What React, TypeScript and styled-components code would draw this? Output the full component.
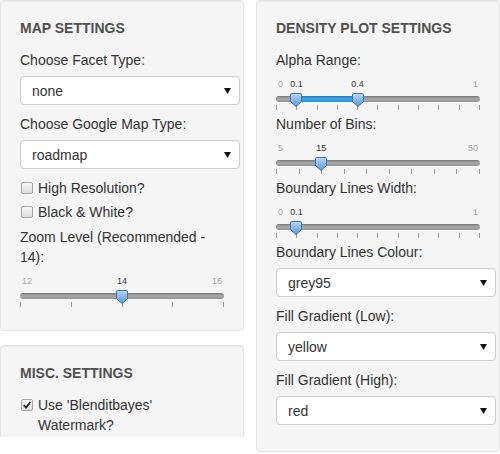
import React, { useId } from 'react';
import styled, { createGlobalStyle } from 'styled-components';

const Global = createGlobalStyle`
  html, body { margin: 0; padding: 0; background: #fff; }
  body {
    font-family: "Liberation Sans", Arial, Helvetica, sans-serif;
    font-size: 14px;
    line-height: 20px;
    color: #333;
  }
  * { box-sizing: border-box; }
`;

const Page = styled.div`
  display: grid;
  grid-template-columns: 244px 244px;
  column-gap: 12px;
  align-items: start;
  width: 500px;
  height: 454px;
  overflow: hidden;
`;

const Column = styled.div<{ $clip?: number }>`
  display: flex;
  flex-direction: column;
  gap: 14px;
  ${(p) => (p.$clip ? `height: ${p.$clip}px; overflow: hidden;` : '')}
`;

const Well = styled.div<{ $minHeight?: number }>`
  flex: none;
  background: #f5f5f5;
  border: 1px solid #e3e3e3;
  border-radius: 4px;
  box-shadow: inset 0 1px 1px rgba(0, 0, 0, 0.05);
  padding: 19px;
  ${(p) => (p.$minHeight ? `min-height: ${p.$minHeight}px;` : '')}
`;

const Heading = styled.h4`
  margin: 0 0 14px;
  font-size: 14px;
  line-height: 16px;
  font-weight: bold;
  color: #505050;
`;

const Label = styled.div`
  font-size: 14px;
  line-height: 20px;
  color: #333;
`;

const SelectGroup = styled.div`
  margin-bottom: 9px;
  &:last-child { margin-bottom: 7px; }
`;

const SelectBox = styled.div`
  margin-top: 6px;
  width: calc(100% + 16px);
  height: 29px;
  border: 1px solid #ccc;
  border-radius: 4px;
  background: #fff;
  display: flex;
  align-items: center;
  justify-content: space-between;
  padding: 0 8px 0 11px;
  color: #333;
  font-size: 14px;
`;

const Arrow = styled.svg`
  width: 7px;
  height: 6px;
  display: block;
`;

const CheckList = styled.div`
  display: flex;
  flex-direction: column;
  gap: 4px;
  margin-bottom: 5px;
`;

const CheckRow = styled.div`
  display: flex;
  align-items: flex-start;
  gap: 5px;
  line-height: 20px;
  color: #333;
`;

const Box = styled.span`
  flex: none;
  width: 12px;
  height: 12px;
  margin-top: 4px;
  margin-left: 1px;
  border: 1px solid #a6a6a6;
  border-radius: 2px;
  background: linear-gradient(#f6f6f6, #dedede);
  display: flex;
  align-items: center;
  justify-content: center;
`;

const SliderWrap = styled.div`
  height: 44px;
  padding-top: 8px;
`;

const LabelRow = styled.div`
  position: relative;
  height: 12px;
  font-size: 9px;
  line-height: 12px;
`;

const EdgeLabel = styled.span<{ $side: 'left' | 'right' }>`
  position: absolute;
  top: 0;
  ${(p) => p.$side}: 2px;
  color: #a8a8a8;
`;

const ValueLabel = styled.span`
  position: absolute;
  top: 0;
  transform: translateX(-50%);
  color: #333;
`;

const TrackArea = styled.div`
  position: relative;
  height: 6px;
  margin-top: 6px;
`;

const Track = styled.div`
  height: 6px;
  border-radius: 3px;
  background: linear-gradient(#787878, #a8a8a8 45%, #969696);
`;

const Bar = styled.div`
  position: absolute;
  top: 0;
  height: 6px;
  background: linear-gradient(#1c78bd, #3fa6e8 45%, #2a90d8);
`;

const Handle = styled.svg`
  position: absolute;
  top: -3px;
  width: 12px;
  height: 14px;
  margin-left: -6px;
  overflow: visible;
`;

const Ticks = styled.div`
  display: flex;
  justify-content: space-between;
  height: 5px;
  margin-top: 3px;
`;

const Tick = styled.span`
  width: 1px;
  height: 5px;
  background: #9a9a9a;
`;

function HandleIcon({ p }: { p: number }) {
  const id = useId().replace(/:/g, '');
  return (
    <Handle viewBox="0 0 12 14" style={{ left: `${p * 100}%` }}>
      <defs>
        <linearGradient id={id} x1="0" y1="0" x2="0" y2="1">
          <stop offset="0" stopColor="#b9d8f6" />
          <stop offset="1" stopColor="#5898dc" />
        </linearGradient>
      </defs>
      <path
        d="M1.8 0.5 H10.2 Q11.5 0.5 11.5 1.8 V8.6 L6 13.5 L0.5 8.6 V1.8 Q0.5 0.5 1.8 0.5 Z"
        fill={`url(#${id})`}
        stroke="#3b74b8"
        strokeWidth="1"
      />
    </Handle>
  );
}

type SliderProps = {
  min: number;
  max: number;
  from: number;
  to?: number;
  ticks: number;
  minText: string;
  maxText: string;
  fromText: string;
  toText?: string;
};

function Slider({ min, max, from, to, ticks, minText, maxText, fromText, toText }: SliderProps) {
  const pf = (from - min) / (max - min);
  const pt = to !== undefined ? (to - min) / (max - min) : undefined;
  return (
    <SliderWrap>
      <LabelRow>
        <EdgeLabel $side="left">{minText}</EdgeLabel>
        <EdgeLabel $side="right">{maxText}</EdgeLabel>
        <ValueLabel style={{ left: `${pf * 100}%` }}>{fromText}</ValueLabel>
        {pt !== undefined && <ValueLabel style={{ left: `${pt * 100}%` }}>{toText}</ValueLabel>}
      </LabelRow>
      <TrackArea>
        <Track />
        {pt !== undefined && (
          <Bar style={{ left: `${pf * 100}%`, width: `${(pt - pf) * 100}%` }} />
        )}
        <HandleIcon p={pf} />
        {pt !== undefined && <HandleIcon p={pt} />}
      </TrackArea>
      <Ticks>
        {Array.from({ length: ticks }).map((_, i) => (
          <Tick key={i} />
        ))}
      </Ticks>
    </SliderWrap>
  );
}

function Select({ label, value }: { label: string; value: string }) {
  return (
    <SelectGroup>
      <Label>{label}</Label>
      <SelectBox>
        <span>{value}</span>
        <Arrow viewBox="0 0 7 6">
          <polygon points="0,0 7,0 3.5,6" fill="#111" />
        </Arrow>
      </SelectBox>
    </SelectGroup>
  );
}

function Check({ label, checked }: { label: string; checked?: boolean }) {
  return (
    <CheckRow>
      <Box>
        {checked && (
          <svg width="10" height="10" viewBox="0 0 10 10">
            <path d="M1.8 5.2 L4 7.6 L8.4 2" fill="none" stroke="#222" strokeWidth="1.8" />
          </svg>
        )}
      </Box>
      <span>{label}</span>
    </CheckRow>
  );
}

export default function App() {
  return (
    <>
      <Global />
      <Page>
        <Column $clip={437}>
          <Well>
            <Heading>MAP SETTINGS</Heading>
            <Select label="Choose Facet Type:" value="none" />
            <Select label="Choose Google Map Type:" value="roadmap" />
            <CheckList>
              <Check label="High Resolution?" />
              <Check label="Black & White?" />
            </CheckList>
            <Label>Zoom Level (Recommended - 14):</Label>
            <Slider min={12} max={16} from={14} ticks={5} minText="12" maxText="16" fromText="14" />
          </Well>
          <Well $minHeight={120}>
            <Heading>MISC. SETTINGS</Heading>
            <CheckList>
              <Check label="Use 'Blenditbayes' Watermark?" checked />
            </CheckList>
          </Well>
        </Column>
        <Column>
          <Well>
            <Heading>DENSITY PLOT SETTINGS</Heading>
            <Label>Alpha Range:</Label>
            <Slider min={0} max={1} from={0.1} to={0.4} ticks={11} minText="0" maxText="1" fromText="0.1" toText="0.4" />
            <Label>Number of Bins:</Label>
            <Slider min={5} max={50} from={15} ticks={10} minText="5" maxText="50" fromText="15" />
            <Label>Boundary Lines Width:</Label>
            <Slider min={0} max={1} from={0.1} ticks={11} minText="0" maxText="1" fromText="0.1" />
            <Select label="Boundary Lines Colour:" value="grey95" />
            <Select label="Fill Gradient (Low):" value="yellow" />
            <Select label="Fill Gradient (High):" value="red" />
          </Well>
        </Column>
      </Page>
    </>
  );
}
